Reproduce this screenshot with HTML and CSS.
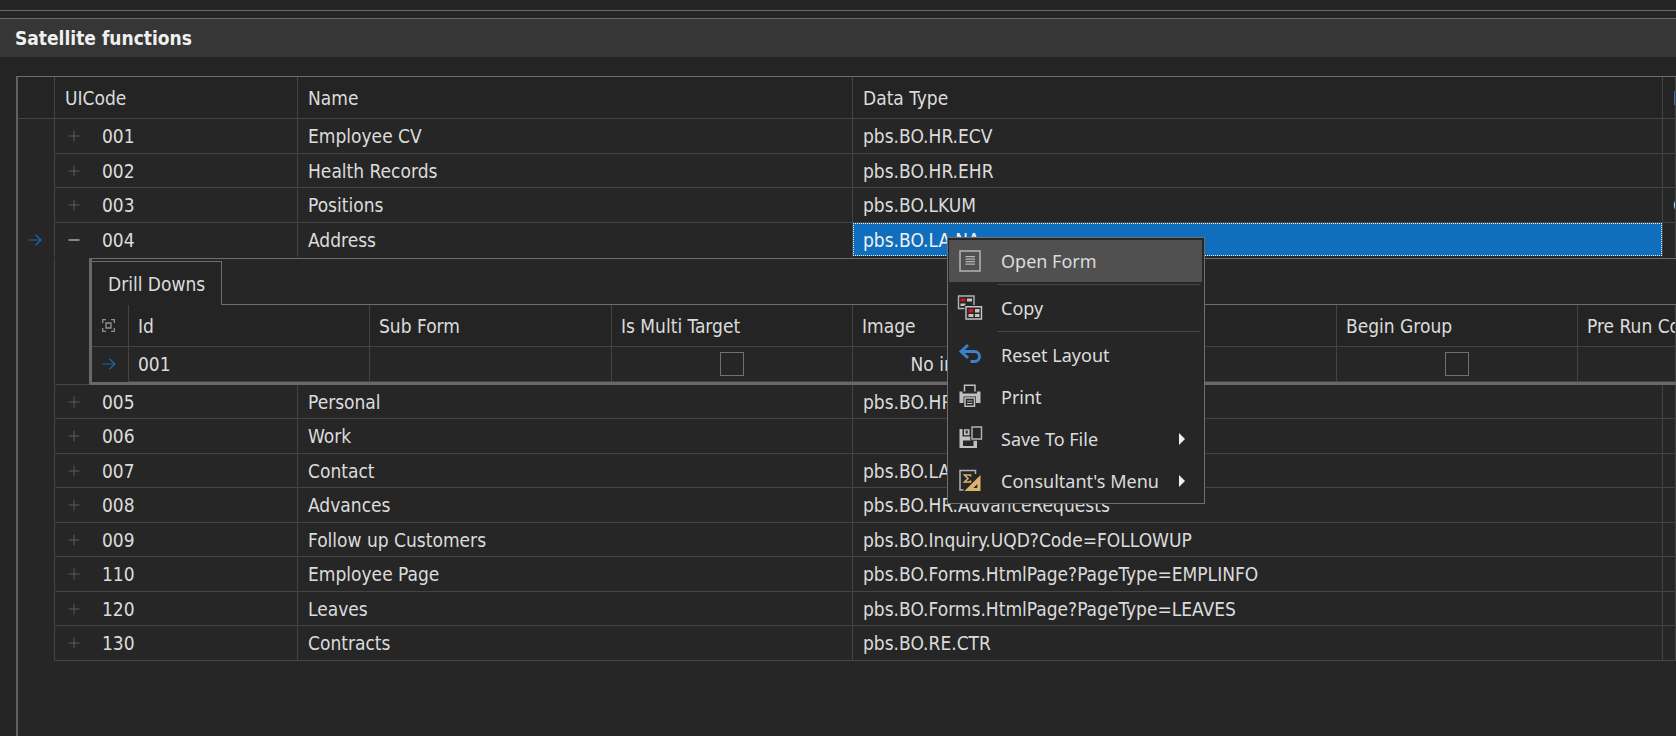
FILE: index.html
```html
<!DOCTYPE html>
<html lang="en">
<head>
<meta charset="utf-8">
<title>Satellite functions</title>
<link rel="stylesheet" href="styles.css">
</head>
<body>
<svg class="defs" aria-hidden="true">
  <symbol id="plus" viewBox="0 0 12 12"><path d="M0.500 6h11M6 0.500v11" fill="none" stroke="currentColor"/></symbol>
  <symbol id="minus" viewBox="0 0 12 12"><path d="M0.500 6h11" fill="none" stroke="currentColor" stroke-width="1.400"/></symbol>
  <symbol id="arrow" viewBox="0 0 14 12"><path d="M0.500 6h12.500M7.500 0.800L13 6l-5.500 5.200" fill="none" stroke="currentColor" stroke-width="1.200"/></symbol>
</svg>
<main class="page">
  <div class="splitter"></div>
  <h1 class="caption">Satellite functions</h1>
  <section class="grid">
    <table class="table">
      <colgroup><col class="c-mark"><col class="c-code"><col class="c-name"><col class="c-type"><col></colgroup>
      <thead>
        <tr><th></th><th>UICode</th><th>Name</th><th>Data Type</th><th>F</th></tr>
      </thead>
      <tbody class="upper">
        <tr><td></td><td><div class="code"><button class="toggle" aria-label="Expand 001"><svg><use href="#plus"/></svg></button>001</div></td><td>Employee CV</td><td>pbs.BO.HR.ECV</td><td></td></tr>
        <tr><td></td><td><div class="code"><button class="toggle" aria-label="Expand 002"><svg><use href="#plus"/></svg></button>002</div></td><td>Health Records</td><td>pbs.BO.HR.EHR</td><td></td></tr>
        <tr><td></td><td><div class="code"><button class="toggle" aria-label="Expand 003"><svg><use href="#plus"/></svg></button>003</div></td><td>Positions</td><td>pbs.BO.LKUM</td><td>C</td></tr>
        <tr class="open"><td class="mark"><svg class="arrow"><use href="#arrow"/></svg></td><td><div class="code"><button class="toggle on" aria-label="Collapse 004"><svg><use href="#minus"/></svg></button>004</div></td><td>Address</td><td class="focus">pbs.BO.LA.NA</td><td></td></tr>
        <tr class="detail"><td></td><td colspan="4">
          <div class="panel">
            <div class="tabs"><button class="tab">Drill Downs</button><div class="tabfill"></div></div>
            <table class="table sub">
              <colgroup><col class="s-mark"><col class="s-col"><col class="s-wide"><col class="s-col"><col class="s-wide"><col class="s-wide"><col class="s-col"><col></colgroup>
              <thead>
                <tr><th class="mark"><svg class="scan" viewBox="0 0 13 13"><path d="M0.700 4V0.700H4M9 0.700h3.300V4M12.300 9v3.300H9M4 12.300H0.700V9M4 4h5v5H4z" fill="none" stroke="currentColor" stroke-width="1.300"/></svg></th><th>Id</th><th>Sub Form</th><th>Is Multi Target</th><th>Image</th><th></th><th>Begin Group</th><th>Pre Run Co</th></tr>
              </thead>
              <tbody>
                <tr><td class="mark"><svg class="arrow"><use href="#arrow"/></svg></td><td>001</td><td></td><td class="mid"><input type="checkbox" class="box" aria-label="Is Multi Target"></td><td class="mid">No image data</td><td></td><td class="mid"><input type="checkbox" class="box" aria-label="Begin Group"></td><td></td></tr>
              </tbody>
            </table>
          </div>
        </td></tr>
      </tbody>
      <tbody class="lower">
        <tr><td></td><td><div class="code"><button class="toggle" aria-label="Expand 005"><svg><use href="#plus"/></svg></button>005</div></td><td>Personal</td><td>pbs.BO.HR</td><td></td></tr>
        <tr><td></td><td><div class="code"><button class="toggle" aria-label="Expand 006"><svg><use href="#plus"/></svg></button>006</div></td><td>Work</td><td></td><td></td></tr>
        <tr><td></td><td><div class="code"><button class="toggle" aria-label="Expand 007"><svg><use href="#plus"/></svg></button>007</div></td><td>Contact</td><td>pbs.BO.LA</td><td></td></tr>
        <tr><td></td><td><div class="code"><button class="toggle" aria-label="Expand 008"><svg><use href="#plus"/></svg></button>008</div></td><td>Advances</td><td>pbs.BO.HR.AdvanceRequests</td><td></td></tr>
        <tr><td></td><td><div class="code"><button class="toggle" aria-label="Expand 009"><svg><use href="#plus"/></svg></button>009</div></td><td>Follow up Customers</td><td>pbs.BO.Inquiry.UQD?Code=FOLLOWUP</td><td></td></tr>
        <tr><td></td><td><div class="code"><button class="toggle" aria-label="Expand 110"><svg><use href="#plus"/></svg></button>110</div></td><td>Employee Page</td><td>pbs.BO.Forms.HtmlPage?PageType=EMPLINFO</td><td></td></tr>
        <tr><td></td><td><div class="code"><button class="toggle" aria-label="Expand 120"><svg><use href="#plus"/></svg></button>120</div></td><td>Leaves</td><td>pbs.BO.Forms.HtmlPage?PageType=LEAVES</td><td></td></tr>
        <tr><td></td><td><div class="code"><button class="toggle" aria-label="Expand 130"><svg><use href="#plus"/></svg></button>130</div></td><td>Contracts</td><td>pbs.BO.RE.CTR</td><td></td></tr>
      </tbody>
    </table>
  </section>
  <div class="menu" role="menu">
    <button class="item hot" role="menuitem"><svg class="icon" viewBox="0 0 24 24"><path d="M2 2h20v20H2z" fill="none" stroke="#b4b4b4" stroke-width="1.500"/><path d="M7.500 7.700h9.500M7.500 10.200h9.500M7.500 12.700h9.500M7.500 15.200h9.500" stroke="#b4b4b4" stroke-width="1.200"/></svg>Open Form</button>
    <hr>
    <button class="item" role="menuitem"><svg class="icon" viewBox="0 0 24 24"><path d="M0.500 0h15.500v12.500H0.500z" fill="none" stroke="#b4b4b4" stroke-width="1.400"/><path d="M2.500 2.500h5v3h-5z" fill="#d01818"/><path d="M9 2.500h5v3H9zM2.500 7.500h5v2.500h-5z" fill="#c4c4c4"/><path d="M6.500 9h18v16h-18z" fill="#262626"/><path d="M8 10.700h15.500v12.300H8z" fill="none" stroke="#c4c4c4" stroke-width="1.400"/><path d="M10.500 13h5v3.500h-5z" fill="#d01818"/><path d="M17 13h4.500v3.500H17zM10.500 18h5v3h-5zM17 18h4.500v3H17z" fill="#c4c4c4"/></svg>Copy</button>
    <hr>
    <button class="item" role="menuitem"><svg class="icon" viewBox="0 0 24 24"><path d="M10 2L3 8.500l7 6.500M3.500 8.500H16.500a5 5 0 0 1 0 10H12.500" fill="none" stroke="#3a82cc" stroke-width="2.900"/></svg>Reset Layout</button>
    <button class="item" role="menuitem"><svg class="icon" viewBox="0 0 24 24"><path d="M6.500 6.500V0.200h10.500V6.500" fill="none" stroke="#c0c0c0" stroke-width="1.500"/><path d="M1.500 6.500H4.500v2h14.500v-2h3.500v11.500H1.500z" fill="#c0c0c0"/><path d="M5.500 11.500h12.500V22H5.500z" fill="#262626"/><path d="M7 13h9.500v8.300H7z" fill="#262626" stroke="#c0c0c0" stroke-width="1.500"/><path d="M9 16h5.500M9 18.500h5.500" stroke="#c0c0c0" stroke-width="1.200"/></svg>Print</button>
    <button class="item" role="menuitem"><svg class="icon" viewBox="0 0 24 24"><path d="M1.500 2h3v7.500h8V13.500h6.500V21H1.500z" fill="#c0c0c0"/><path d="M5 13.500h10.500v5.500H5z" fill="#262626"/><path d="M6 2.200h5.500v6H6z" fill="#c0c0c0"/><path d="M7.700 3.500h2v3h-2z" fill="#262626"/><path d="M12.500 -1h11.500v14.500H12.500z" fill="#262626"/><path d="M14 0h9.500v12H14z" fill="none" stroke="#b4b4b4" stroke-width="1.400"/></svg>Save To File<svg class="more" viewBox="0 0 6 12"><path d="M0 0l6 6-6 6z"/></svg></button>
    <button class="item" role="menuitem"><svg class="icon" viewBox="0 0 24 24"><path d="M17.500 5V1.500H2V21h3.500" fill="none" stroke="#b4b4b4" stroke-width="1.500"/><path d="M12.500 7.500V6H6.500L10 9.500l-3.500 3.500h6V11.500" fill="none" stroke="#dcb36c" stroke-width="1.600"/><path d="M22.500 6V22H6.500zM19.300 15l-3.900 4h3.900z" fill="#dcb36c" fill-rule="evenodd"/></svg>Consultant's Menu<svg class="more" viewBox="0 0 6 12"><path d="M0 0l6 6-6 6z"/></svg></button>
  </div>
</main>
</body>
</html>
```
FILE: styles.css
```css
* { box-sizing: border-box; }
body {
  margin: 0;
  background: #242424;
  color: #dcdcdc;
  font: 19px/24px "DejaVu Sans Condensed", "DejaVu Sans", sans-serif;
}
button { margin: 0; padding: 0; border: 0; background: none; color: inherit; font: inherit; text-align: left; }
.defs { display: none; }
.page { position: relative; display: flex; flex-direction: column; height: 100vh; overflow: hidden; }
.splitter { height: 8px; margin-top: 10px; border-top: 1px solid #6a6a6a; flex: none; }
.caption {
  flex: none;
  margin: 0;
  padding: 7px 15px;
  border-top: 1px solid #6a6a6a;
  background: #363636;
  color: #f0f0f0;
  font-size: 19px;
  line-height: 24px;
}
.grid {
  flex: 1;
  min-height: 0;
  margin: 19px 0 0 16px;
  border-top: 1px solid #6e6e6e;
  border-left: 2px solid #606060;
  background: #262626;
  overflow: hidden;
}
.table { width: 100%; table-layout: fixed; border-collapse: separate; border-spacing: 0; }
.c-mark { width: 37px; }
.c-code { width: 243px; }
.c-name { width: 555px; }
.c-type { width: 810px; }
.s-mark { width: 37px; }
.s-col { width: 241px; }
.s-wide { width: 242px; }
th, td {
  height: 34px;
  padding: 0 0 0 10px;
  border-right: 1px solid #444;
  border-bottom: 1px solid #444;
  font-weight: normal;
  text-align: left;
  vertical-align: middle;
  white-space: nowrap;
  overflow: hidden;
}
th { height: 42px; background: #242424; }
.upper > tr:nth-child(odd) > td,
.lower > tr:nth-child(even) > td,
.upper > .open > td { height: 35px; }
.sub > tbody > tr > td { height: 35px; }
.table > tbody > tr > td:first-child { border-bottom-color: transparent; }
.code { display: flex; align-items: center; gap: 22px; padding-left: 3px; }
.toggle { width: 12px; height: 12px; color: #5a5a5a; }
.toggle.on { color: #b0b0b0; }
.toggle svg { display: block; width: 12px; height: 12px; }
.upper > .open > td { border-bottom: 2px solid #262626; }
.arrow { display: block; width: 14px; height: 12px; margin: 0 auto; color: #1868ac; }
.scan { display: block; width: 13px; height: 13px; margin: 0 auto; color: #929292; }
.focus { position: relative; background: #106ebe padding-box; color: #f0f0f0; }
.focus::after { content: ""; position: absolute; inset: 0; border: 1px dotted #f0f0f0; }
.detail > td { padding: 0 0 0 34px; border-right: 0; overflow: visible; }
.detail > td:first-child { border-right: 1px solid #444; }
.panel {
  margin-bottom: -1px;
  border-top: 1px solid #6e6e6e;
  border-left: 3px solid #686868;
  border-bottom: 3px solid #686868;
  padding-top: 2px;
}
.tabs { display: flex; }
.tab {
  height: 44px;
  padding: 0 16px;
  border-top: 1px solid #6e6e6e;
  border-right: 1px solid #6e6e6e;
  background: #242424;
}
.tabfill { flex: 1; border-bottom: 1px solid #6e6e6e; }
.sub th, .sub td { padding-left: 9px; }
.table .mark { padding: 0 3px 0 0; text-align: center; }
.table .mid { padding: 0; text-align: center; }
.box {
  display: block;
  appearance: none;
  width: 24px;
  height: 24px;
  margin: 0 auto;
  border: 1px solid #707070;
}
.menu {
  position: absolute;
  top: 237px;
  left: 947px;
  width: 258px;
  padding: 2px 2px 1px 1px;
  border: 1px solid #6e6e6e;
  background: #262626;
  font-family: "Noto Sans", sans-serif;
  font-size: 18px;
}
.item { display: flex; align-items: center; width: 100%; height: 42px; padding: 0 17px 0 9px; }
.item.hot { background: #505050; }
.icon { width: 24px; height: 24px; margin-right: 19px; overflow: visible; flex: none; }
.more { width: 6px; height: 12px; margin-left: auto; fill: #f0f0f0; }
.menu hr { height: 1px; margin: 2px 2px 2px 48px; border: 0; background: #444; }
```
